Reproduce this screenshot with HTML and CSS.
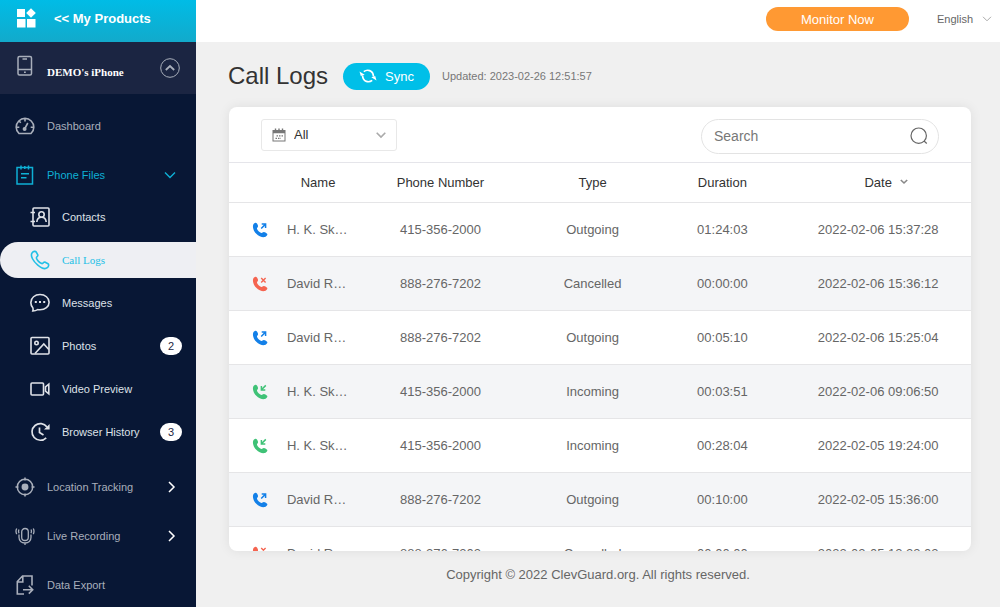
FILE: index.html
```html
<!DOCTYPE html>
<html lang="en">
<head>
  <meta charset="UTF-8" />
  <meta name="viewport" content="width=device-width, initial-scale=1.0"/>
  <title>Call Logs</title>
  <link rel="stylesheet" href="styles.css">
</head>
<body>

  <!-- CALL ICONS -->
  <svg class="sprite" aria-hidden="true">
    <symbol id="handset" viewBox="0 0 16 16">
      <path fill="currentColor" d="M1.300 2.600C2 1.300 3.300.5 4.300 1c1.100.6 1.900 2.500 1.700 3.600-.1 1-1.200 1.300-1 2.200.3 1.500 2.600 3.700 4.300 4.100 1 .2 1.400-1 2.500-1 1.300 0 3.100 1.100 3.500 2.200.4 1.100-1.300 2.600-2.600 3-2.400.6-6-.8-8.400-3.300C1.700 9.400.200 5.200 1.300 2.600z"/>
    </symbol>
    <symbol id="outgoing" viewBox="0 0 16 16">
      <use href="#handset"/>
      <path fill="none" stroke="currentColor" stroke-width="1.500" d="M9.200 6.500 13.300 2.400M9.700 2.100h3.900V6"/>
    </symbol>
    <symbol id="incoming" viewBox="0 0 16 16">
      <use href="#handset"/>
      <path fill="none" stroke="currentColor" stroke-width="1.500" d="M13.800 1.400 9.700 5.500M9.400 2v3.900h3.900"/>
    </symbol>
    <symbol id="cancelled" viewBox="0 0 16 16">
      <use href="#handset"/>
      <path fill="none" stroke="currentColor" stroke-width="1.400" d="m9.200 2 4.400 4.400M13.600 2 9.200 6.400"/>
    </symbol>
  </svg>

  <div class="layout">

    <!-- SIDEBAR -->
    <aside class="sidebar">
      <a class="products" href="#">
        <svg width="20" height="20" viewBox="0 0 20 20" fill="#fff">
          <rect x="1" y="1" width="8" height="8"/>
          <rect x="1" y="11" width="8.500" height="8.500"/>
          <rect x="11" y="11" width="8.500" height="8.500"/>
          <path d="m15 .2 4.800 4.800-4.800 4.800-4.800-4.800z"/>
        </svg>
        <span>&lt;&lt; My Products</span>
      </a>

      <div class="device">
        <svg class="device-icon" width="20" height="22" viewBox="0 0 20 22" fill="none" stroke="currentColor" stroke-width="1.500">
          <rect x="3" y="1.500" width="13.500" height="18.500" rx="1.500"/>
          <path d="M3 14.500h13.500M7.500 4h4.500M9 17.300h1.800"/>
        </svg>
        <span>DEMO's iPhone</span>
        <button class="device-toggle" aria-label="Collapse">
          <svg width="20" height="20" viewBox="0 0 20 20" fill="none" stroke="currentColor">
            <circle cx="10" cy="10" r="9.300"/>
            <path stroke-width="1.800" d="m5.800 12 4.200-4 4.200 4"/>
          </svg>
        </button>
      </div>

      <nav class="menu">
        <a class="menu-item" href="#">
          <svg width="20" height="20" viewBox="0 0 20 20" fill="none" stroke="currentColor" stroke-width="1.600">
            <path d="M4 17.500h12c1.800-1.700 2.800-3.900 2.800-6.300A8.800 8.800 0 0 0 1.200 11.200C1.200 13.600 2.200 15.800 4 17.500z"/>
            <path d="M10 2.500v3M4 5l1.800 1.800M1.500 11.200h2.800M15.700 11.200h2.800M9.300 13.500 12.800 7"/>
            <circle cx="9.600" cy="13" r="1.200" fill="currentColor"/>
          </svg>
          <span>Dashboard</span>
        </a>
        <a class="menu-item open" href="#">
          <svg width="20" height="20" viewBox="0 0 20 20" fill="none" stroke="currentColor" stroke-width="1.500">
            <rect x="2" y="2.500" width="15.500" height="16.500"/>
            <path d="M6 .5v4M13.500.5v4M9.800 1v3M6 8.700h8M6 12.700h5.500"/>
          </svg>
          <span>Phone Files</span>
          <svg class="arrow" width="12" height="12" viewBox="0 0 12 12" fill="none" stroke="currentColor" stroke-width="1.400">
            <path d="m1 3.500 5 5 5-5"/>
          </svg>
        </a>

        <div class="submenu">
          <a class="sub-item" href="#">
            <svg width="20" height="20" viewBox="0 0 20 20" fill="none" stroke="currentColor" stroke-width="1.600">
              <rect x="3" y="1" width="16" height="18" rx="1"/>
              <path d="M.5 5.500h4.500M.5 14.500h4.500"/>
              <circle cx="11.500" cy="7.500" r="2.700"/>
              <path d="M6.800 15c.3-3 2-4.700 4.700-4.700s4.400 1.700 4.700 4.700"/>
            </svg>
            <span>Contacts</span>
          </a>
          <a class="sub-item active" href="#">
            <svg width="20" height="20" viewBox="0 0 20 20" fill="none" stroke="currentColor" stroke-width="1.600">
              <path d="M2.200 2.700c1.200-1.500 3.300-1.700 4-.7l1.600 2.900c.5 1-1.600 2.200-1.400 3.200.5 2 3.200 4.800 5.400 5.500 1 .3 1.900-1.900 3-1.500l3.200 1.700c1.200.7.600 2.900-.7 3.900-1.800 1.400-5.500.8-9.500-2.600C3.500 11.600-.200 5.800 2.200 2.700z"/>
            </svg>
            <span>Call Logs</span>
          </a>
          <a class="sub-item" href="#">
            <svg width="20" height="20" viewBox="0 0 20 20" fill="none" stroke="currentColor" stroke-width="1.600">
              <path d="M2.800 18c.4-1.300.4-2.300 0-3.300A7.200 7.200 0 0 1 .9 9.300C.9 4.900 4.900 1.500 10 1.500s9.100 3.400 9.100 7.800-4 7.500-9.100 7.500c-.8 0-1.600 0-2.300-.2-1.200.7-2.900 1.300-4.900 1.400z"/>
              <path stroke-width="2" d="M4.800 9h2M9 9h2M13.200 9h2"/>
            </svg>
            <span>Messages</span>
          </a>
          <a class="sub-item" href="#">
            <svg width="20" height="20" viewBox="0 0 20 20" fill="none" stroke="currentColor" stroke-width="1.600">
              <rect x="1" y="1.500" width="18" height="16.500" rx="1"/>
              <circle cx="6.500" cy="7" r="1.700"/>
              <path d="M5 17.500 13.800 8l5 5.500"/>
            </svg>
            <span>Photos</span>
            <b class="count">2</b>
          </a>
          <a class="sub-item" href="#">
            <svg width="20" height="20" viewBox="0 0 20 20" fill="none" stroke="currentColor" stroke-width="1.600">
              <rect x="1" y="4" width="12.500" height="12" rx="1"/>
              <path d="m15.500 7.800 3.300-2.600v9.600l-3.300-2.600z"/>
            </svg>
            <span>Video Preview</span>
          </a>
          <a class="sub-item" href="#">
            <svg width="20" height="20" viewBox="0 0 20 20" fill="none" stroke="currentColor" stroke-width="1.700">
              <path d="M16.200 15.800A8.300 8.300 0 1 1 17 5"/>
              <path d="M9.500 5.500v5l4 2.500"/>
              <path fill="currentColor" stroke="none" d="M19.600 2v5.400h-5.600z"/>
            </svg>
            <span>Browser History</span>
            <b class="count">3</b>
          </a>
        </div>

        <a class="menu-item" href="#">
          <svg width="20" height="20" viewBox="0 0 20 20" fill="none" stroke="currentColor" stroke-width="1.500">
            <circle cx="10" cy="10" r="7.700"/>
            <circle cx="10" cy="10" r="2.700" fill="currentColor"/>
            <path d="M10 .5v3M10 16.500v3M.5 10h3M16.500 10h3"/>
          </svg>
          <span>Location Tracking</span>
          <svg class="arrow white" width="8" height="12" viewBox="0 0 8 12" fill="none" stroke="currentColor" stroke-width="1.500">
            <path d="m1 1 5 5-5 5"/>
          </svg>
        </a>
        <a class="menu-item" href="#">
          <svg width="20" height="20" viewBox="0 0 20 20" fill="none" stroke="currentColor" stroke-width="1.300">
            <rect x="6.700" y="2.500" width="6.600" height="12" rx="3.300"/>
            <path d="M4 8.500v2.800c0 3.500 2.500 5.700 6 5.700s6-2.200 6-5.700V8.500M10 17v2M4 3.500c-.6 1.200-.6 2.500 0 3.700M16 3.500c.6 1.200.6 2.500 0 3.700M1.700 2.500c-.9 1.800-.9 3.800 0 5.600M18.300 2.500c.9 1.800.9 3.800 0 5.600"/>
          </svg>
          <span>Live Recording</span>
          <svg class="arrow white" width="8" height="12" viewBox="0 0 8 12" fill="none" stroke="currentColor" stroke-width="1.500">
            <path d="m1 1 5 5-5 5"/>
          </svg>
        </a>
        <a class="menu-item" href="#">
          <svg width="20" height="20" viewBox="0 0 20 20" fill="none" stroke="currentColor" stroke-width="1.600">
            <path d="M9 19H2.300V6.500L7.500 1H17v9.500M7.800 1v6H2.500M8 14.700h9.500M13.800 10.800l3.900 3.900-3.900 3.900"/>
          </svg>
          <span>Data Export</span>
        </a>
      </nav>
    </aside>

    <div class="page">

      <!-- TOP BAR -->
      <header class="topbar">
        <button class="monitor-btn">Monitor Now</button>
        <div class="language">
          <select aria-label="Language">
            <option>English</option>
          </select>
          <svg width="10" height="6" viewBox="0 0 10 6" fill="none" stroke="currentColor"><path d="m1 .8 4 4 4-4"/></svg>
        </div>
      </header>

      <main class="content">
        <div class="title-row">
          <h1>Call Logs</h1>
          <button class="sync-btn">
            <svg width="18" height="14" viewBox="0 0 18 14" fill="none" stroke="currentColor" stroke-width="1.700">
              <path d="M4.800 2.600C8 .2 14 .8 14.500 7.500M13.200 11.400C10 13.800 4 13.200 3.500 6.500"/>
              <path fill="currentColor" stroke="none" d="m12.300 8.200 3.900-1.200 1.300 4.600zM5.700 5.800 1.800 7 .5 2.400z"/>
            </svg>
            Sync
          </button>
          <span class="updated">Updated: 2023-02-26 12:51:57</span>
        </div>

        <!-- CALL LOG CARD -->
        <section class="card">
          <div class="toolbar">
            <div class="filter">
              <svg width="14" height="14" viewBox="0 0 14 14" fill="none" stroke="currentColor">
                <rect x="1" y="2.500" width="12" height="10.500"/>
                <path stroke-width="2.500" d="M1 4h12"/>
                <path stroke-width="1.400" d="M3.500.5v3M7 .5v3M10.500.5v3"/>
                <path stroke-width="1.300" stroke-dasharray="1.500 1" d="M4.500 7.800H11M3.500 10.300H9"/>
              </svg>
              <select aria-label="Filter by date">
                <option>All</option>
              </select>
              <svg class="caret" width="10" height="8" viewBox="0 0 10 8" fill="none" stroke="currentColor" stroke-width="1.600"><path d="m.7 1.700 4.300 4.300 4.300-4.300"/></svg>
            </div>
            <div class="search">
              <input type="text" placeholder="Search" aria-label="Search">
              <button aria-label="Search calls">
                <svg width="18" height="18" viewBox="0 0 18 18" fill="none" stroke="currentColor" stroke-width="1.200">
                  <circle cx="8.700" cy="8.700" r="7.700"/>
                  <path d="m14 14 2.800 2.500"/>
                </svg>
              </button>
            </div>
          </div>

          <table class="logs">
            <colgroup>
              <col class="col-icon"><col class="col-name"><col class="col-phone">
              <col class="col-type"><col class="col-duration"><col class="col-date">
            </colgroup>
            <thead>
              <tr>
                <th></th>
                <th>Name</th>
                <th>Phone Number</th>
                <th>Type</th>
                <th>Duration</th>
                <th>
                  <button class="sort-btn">Date
                    <svg width="8" height="6" viewBox="0 0 8 6" fill="none" stroke="currentColor" stroke-width="1.600"><path d="m.8 1 3.200 3 3.200-3"/></svg>
                  </button>
                </th>
              </tr>
            </thead>
            <tbody>
              <tr>
                <td><svg class="call blue"><use href="#outgoing"/></svg></td>
                <td class="name">H. K. Sk…</td>
                <td>415-356-2000</td>
                <td>Outgoing</td>
                <td>01:24:03</td>
                <td>2022-02-06 15:37:28</td>
              </tr>
              <tr>
                <td><svg class="call red"><use href="#cancelled"/></svg></td>
                <td class="name">David R…</td>
                <td>888-276-7202</td>
                <td>Cancelled</td>
                <td>00:00:00</td>
                <td>2022-02-06 15:36:12</td>
              </tr>
              <tr>
                <td><svg class="call blue"><use href="#outgoing"/></svg></td>
                <td class="name">David R…</td>
                <td>888-276-7202</td>
                <td>Outgoing</td>
                <td>00:05:10</td>
                <td>2022-02-06 15:25:04</td>
              </tr>
              <tr>
                <td><svg class="call green"><use href="#incoming"/></svg></td>
                <td class="name">H. K. Sk…</td>
                <td>415-356-2000</td>
                <td>Incoming</td>
                <td>00:03:51</td>
                <td>2022-02-06 09:06:50</td>
              </tr>
              <tr>
                <td><svg class="call green"><use href="#incoming"/></svg></td>
                <td class="name">H. K. Sk…</td>
                <td>415-356-2000</td>
                <td>Incoming</td>
                <td>00:28:04</td>
                <td>2022-02-05 19:24:00</td>
              </tr>
              <tr>
                <td><svg class="call blue"><use href="#outgoing"/></svg></td>
                <td class="name">David R…</td>
                <td>888-276-7202</td>
                <td>Outgoing</td>
                <td>00:10:00</td>
                <td>2022-02-05 15:36:00</td>
              </tr>
              <tr>
                <td><svg class="call red"><use href="#cancelled"/></svg></td>
                <td class="name">David R…</td>
                <td>888-276-7202</td>
                <td>Cancelled</td>
                <td>00:00:00</td>
                <td>2022-02-05 12:23:02</td>
              </tr>
            </tbody>
          </table>
        </section>
      </main>

      <footer class="footer">Copyright © 2022 ClevGuard.org. All rights reserved.</footer>
    </div>
  </div>

</body>
</html>
```

FILE: styles.css
```css
/* Reset & Base */
* { box-sizing: border-box; margin: 0; padding: 0; }
body {
  font-family: "Liberation Sans", Arial, sans-serif;
  font-size: 13px;
  background: #fff;
  color: #333;
}
a { text-decoration: none; color: inherit; }
button, input, select {
  font: inherit;
  color: inherit;
  background: none;
  border: none;
  outline: none;
}
button, select { cursor: pointer; }
select { appearance: none; }
svg { display: block; flex-shrink: 0; }
.sprite {
  position: absolute;
  width: 0;
  height: 0;
}
.layout {
  display: flex;
  height: 100vh;
  padding-bottom: 1px;
}

/* Sidebar */
.sidebar {
  width: 196px;
  flex-shrink: 0;
  overflow: hidden;
  background: #081735;
  color: #a9afbb;
  font-size: 11px;
}
.products {
  display: flex;
  align-items: center;
  gap: 18px;
  height: 42px;
  padding: 0 16px 6px;
  background: linear-gradient(#00bce6, #12aacb);
  color: #fff;
  font-size: 13px;
  font-weight: bold;
}
.device {
  display: flex;
  align-items: center;
  gap: 12px;
  height: 52px;
  padding: 0 16px 0 15px;
  background: #1b2542;
}
.device-icon { margin-bottom: 4px; }
.device span {
  flex: 1;
  padding-top: 8px;
  color: #fff;
  font-family: "Liberation Serif", "Times New Roman", serif;
  font-weight: bold;
}
.device-toggle { color: #a9afbb; }

/* Menu */
.menu { padding-top: 7px; }
.menu-item {
  display: flex;
  align-items: center;
  gap: 12px;
  height: 49px;
  padding: 0 20px 0 15px;
}
.menu-item.open { color: #0eb0d5; }
.arrow { margin-left: auto; }
.white { color: #fff; }
.submenu {
  display: flex;
  flex-direction: column;
  gap: 7px;
  margin-bottom: 12px;
}
.sub-item {
  display: flex;
  align-items: center;
  gap: 12px;
  height: 36px;
  padding: 0 14px 0 30px;
  color: #dfe2e8;
}
.sub-item.active {
  background: #eeeff3;
  border-radius: 18px 0 0 18px;
  color: #22c0e6;
  font-family: "Liberation Serif", "Times New Roman", serif;
}
.count {
  width: 22px;
  margin-left: auto;
  border-radius: 9px;
  background: #fff;
  color: #1b2542;
  font-weight: normal;
  line-height: 18px;
  text-align: center;
}

/* Page */
.page {
  flex: 1;
  min-width: 0;
  display: flex;
  flex-direction: column;
  background: #f0f0f0;
}
.topbar {
  display: flex;
  align-items: center;
  justify-content: flex-end;
  gap: 28px;
  height: 42px;
  padding: 0 8px 4px;
  background: #fff;
}
.monitor-btn {
  width: 143px;
  height: 24px;
  border-radius: 12px;
  background: #ff9933;
  color: #fff;
}
.language {
  display: flex;
  align-items: center;
  gap: 8px;
  color: #aaa;
}
.language select {
  color: #666;
  font-size: 11px;
}
.content {
  flex: 1;
  min-height: 0;
  display: flex;
  flex-direction: column;
  padding: 15px 29px 0 33px;
}
.title-row {
  display: flex;
  align-items: center;
  height: 38px;
  margin: 0 0 12px -1px;
}
h1 {
  font-size: 24px;
  font-weight: normal;
}
.sync-btn {
  display: flex;
  align-items: center;
  gap: 8px;
  height: 27px;
  margin: 0 12px 0 15px;
  padding: 0 16px;
  border-radius: 14px;
  background: #00bfe8;
  color: #fff;
}
.updated {
  color: #777;
  font-size: 11px;
}

/* Card */
.card {
  flex: 1;
  min-height: 0;
  overflow: hidden;
  border-radius: 8px;
  background: #fff;
  box-shadow: 0 0 12px rgba(0,0,0,0.08);
}
.toolbar {
  display: flex;
  align-items: center;
  justify-content: space-between;
  height: 56px;
  padding: 0 32px;
  border-bottom: 1px solid #e5e5ea;
}
.filter {
  display: flex;
  align-items: center;
  gap: 8px;
  width: 136px;
  height: 32px;
  padding: 0 10px;
  border: 1px solid #e8e8e8;
  border-radius: 3px;
  color: #777;
}
.filter select {
  flex: 1;
  color: #333;
}
.caret { color: #aaa; }
.search {
  display: flex;
  align-items: center;
  width: 238px;
  height: 35px;
  padding: 0 10px 0 12px;
  margin-top: 3px;
  border: 1px solid #e3e3e3;
  border-radius: 18px;
}
.search input {
  flex: 1;
  min-width: 0;
  font-size: 14px;
}
.search input::placeholder { color: #777; }
.search button { color: #666; }

/* Table */
.logs {
  width: 100%;
  table-layout: fixed;
  border-collapse: collapse;
  text-align: center;
}
.col-icon { width: 7%; }
.col-name { width: 10%; }
.col-phone { width: 23%; }
.col-type { width: 18%; }
.col-duration { width: 17%; }
.col-date { width: 25%; }
.logs tr { border-bottom: 1px solid #e5e5e7; }
.logs th {
  height: 39px;
  font-weight: normal;
}
.logs td {
  height: 54px;
  color: #666;
}
.logs tbody tr:nth-child(even) { background: #f4f5f7; }
.logs .name {
  padding-left: 6px;
  text-align: left;
}
.sort-btn {
  display: inline-flex;
  align-items: center;
  gap: 8px;
  padding-left: 16px;
}
.sort-btn svg { color: #888; }
.call {
  width: 16px;
  height: 16px;
  margin: 2px 0 0 23px;
}
.blue { color: #1380e8; }
.red { color: #f56450; }
.green { color: #3fc277; }

/* Footer */
.footer {
  height: 56px;
  padding-top: 16px;
  color: #666;
  text-align: center;
}
```
